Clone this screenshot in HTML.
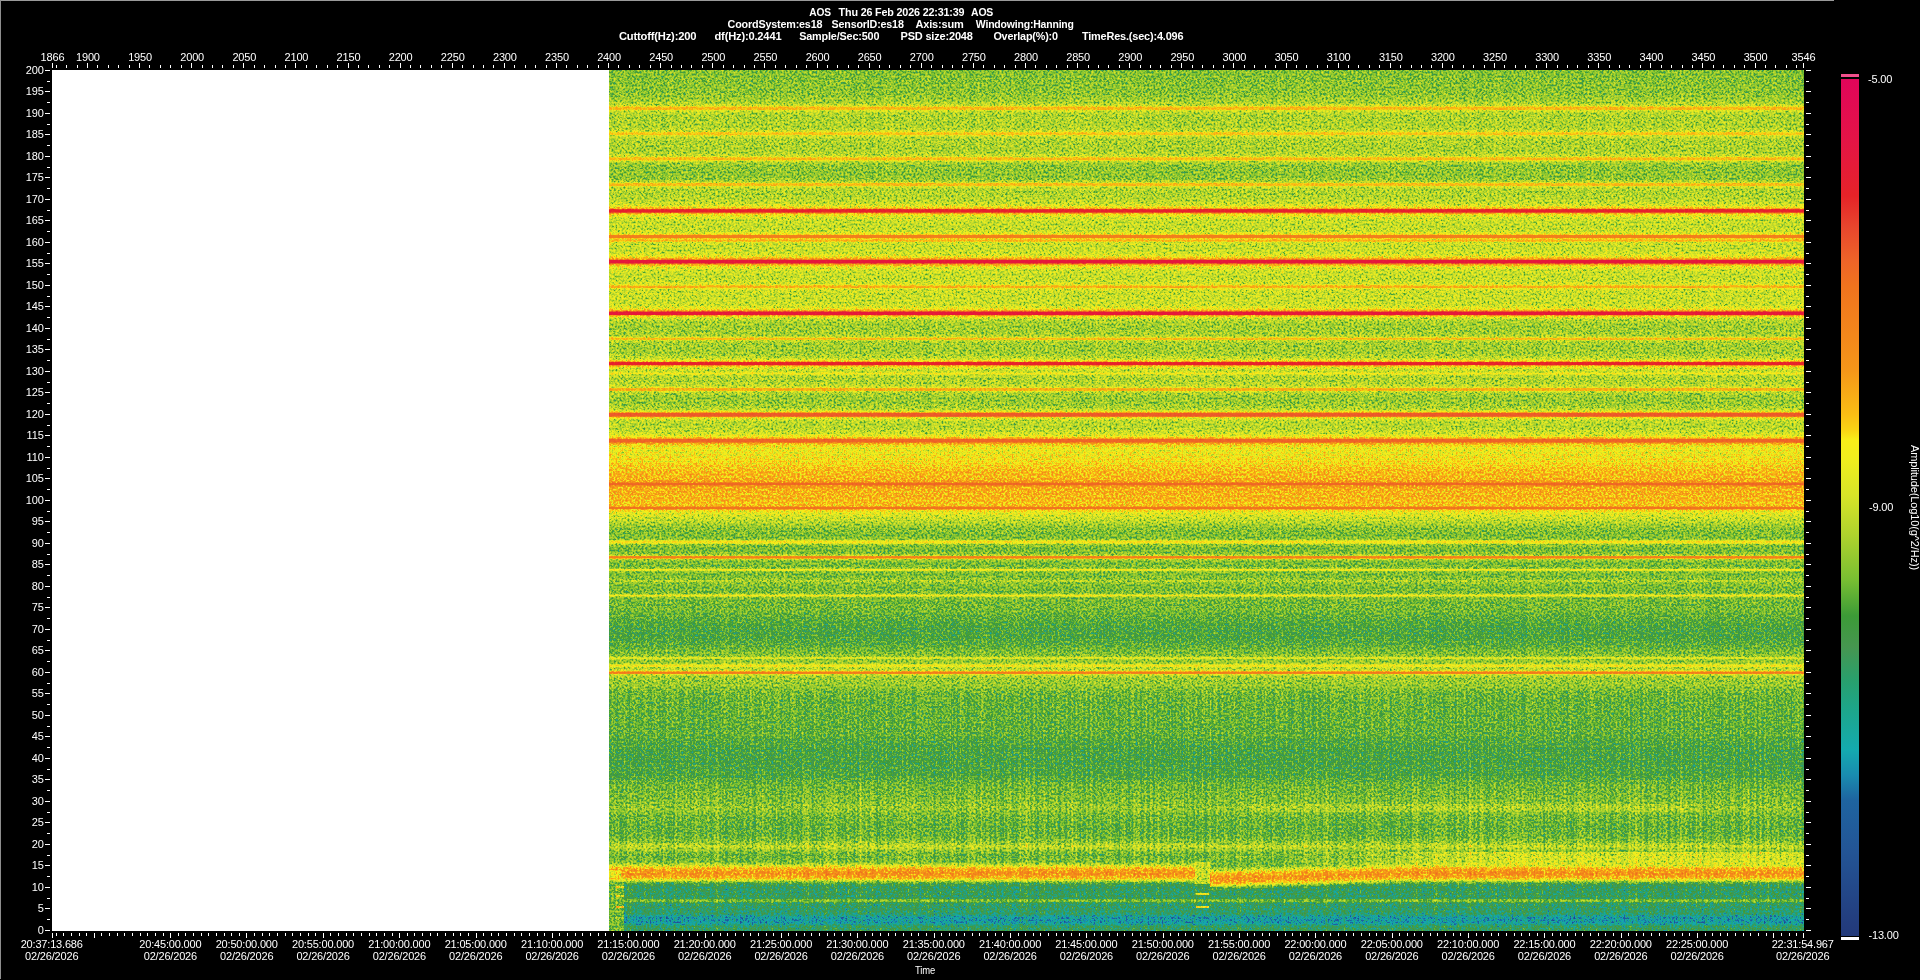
<!DOCTYPE html>
<html lang="en"><head><meta charset="utf-8"><title>AOS Spectrogram</title>
<style>html,body{margin:0;padding:0;background:#000;}body{width:1920px;height:980px;overflow:hidden;position:relative}svg{position:absolute;left:0;top:0;display:block;will-change:transform}text{font-family:"Liberation Sans",sans-serif;font-size:11px;fill:#fff;letter-spacing:-0.18px}.b{font-weight:bold}.p{white-space:pre}.m{text-anchor:middle}.e{text-anchor:end}</style></head><body>
<svg width="1920" height="980" viewBox="0 0 1920 980">
<defs>
<linearGradient id="vg" gradientUnits="userSpaceOnUse" x1="0" y1="70" x2="0" y2="931">
<stop offset="0.0000" stop-color="#6c6c6c"/>
<stop offset="0.0290" stop-color="#6f6f6f"/>
<stop offset="0.0366" stop-color="#757575"/>
<stop offset="0.0383" stop-color="#777777"/>
<stop offset="0.0401" stop-color="#7c7c7c"/>
<stop offset="0.0412" stop-color="#808080"/>
<stop offset="0.0418" stop-color="#838383"/>
<stop offset="0.0424" stop-color="#8d8d8d"/>
<stop offset="0.0430" stop-color="#989898"/>
<stop offset="0.0436" stop-color="#9d9d9d"/>
<stop offset="0.0453" stop-color="#9d9d9d"/>
<stop offset="0.0459" stop-color="#999999"/>
<stop offset="0.0470" stop-color="#848484"/>
<stop offset="0.0482" stop-color="#7f7f7f"/>
<stop offset="0.0494" stop-color="#7b7b7b"/>
<stop offset="0.0505" stop-color="#797979"/>
<stop offset="0.0534" stop-color="#777777"/>
<stop offset="0.0645" stop-color="#777777"/>
<stop offset="0.0674" stop-color="#787878"/>
<stop offset="0.0691" stop-color="#7b7b7b"/>
<stop offset="0.0703" stop-color="#7e7e7e"/>
<stop offset="0.0714" stop-color="#828282"/>
<stop offset="0.0720" stop-color="#888888"/>
<stop offset="0.0726" stop-color="#929292"/>
<stop offset="0.0732" stop-color="#999999"/>
<stop offset="0.0738" stop-color="#9a9a9a"/>
<stop offset="0.0743" stop-color="#9a9a9a"/>
<stop offset="0.0749" stop-color="#989898"/>
<stop offset="0.0755" stop-color="#909090"/>
<stop offset="0.0761" stop-color="#858585"/>
<stop offset="0.0772" stop-color="#7f7f7f"/>
<stop offset="0.0790" stop-color="#7a7a7a"/>
<stop offset="0.0813" stop-color="#787878"/>
<stop offset="0.0848" stop-color="#777777"/>
<stop offset="0.0918" stop-color="#767676"/>
<stop offset="0.0958" stop-color="#787878"/>
<stop offset="0.0981" stop-color="#7b7b7b"/>
<stop offset="0.0993" stop-color="#7e7e7e"/>
<stop offset="0.1005" stop-color="#828282"/>
<stop offset="0.1010" stop-color="#878787"/>
<stop offset="0.1016" stop-color="#939393"/>
<stop offset="0.1022" stop-color="#9b9b9b"/>
<stop offset="0.1028" stop-color="#9c9c9c"/>
<stop offset="0.1039" stop-color="#9c9c9c"/>
<stop offset="0.1045" stop-color="#989898"/>
<stop offset="0.1051" stop-color="#8d8d8d"/>
<stop offset="0.1057" stop-color="#818181"/>
<stop offset="0.1069" stop-color="#7a7a7a"/>
<stop offset="0.1080" stop-color="#757575"/>
<stop offset="0.1086" stop-color="#747474"/>
<stop offset="0.1115" stop-color="#707070"/>
<stop offset="0.1161" stop-color="#6f6f6f"/>
<stop offset="0.1225" stop-color="#6f6f6f"/>
<stop offset="0.1254" stop-color="#707070"/>
<stop offset="0.1278" stop-color="#737373"/>
<stop offset="0.1295" stop-color="#797979"/>
<stop offset="0.1307" stop-color="#808080"/>
<stop offset="0.1312" stop-color="#8f8f8f"/>
<stop offset="0.1318" stop-color="#999999"/>
<stop offset="0.1324" stop-color="#9c9c9c"/>
<stop offset="0.1336" stop-color="#9c9c9c"/>
<stop offset="0.1341" stop-color="#9a9a9a"/>
<stop offset="0.1347" stop-color="#909090"/>
<stop offset="0.1353" stop-color="#848484"/>
<stop offset="0.1365" stop-color="#7e7e7e"/>
<stop offset="0.1376" stop-color="#7b7b7b"/>
<stop offset="0.1400" stop-color="#787878"/>
<stop offset="0.1423" stop-color="#787878"/>
<stop offset="0.1469" stop-color="#787878"/>
<stop offset="0.1516" stop-color="#7b7b7b"/>
<stop offset="0.1545" stop-color="#7e7e7e"/>
<stop offset="0.1568" stop-color="#848484"/>
<stop offset="0.1580" stop-color="#898989"/>
<stop offset="0.1585" stop-color="#8c8c8c"/>
<stop offset="0.1597" stop-color="#959595"/>
<stop offset="0.1603" stop-color="#9c9c9c"/>
<stop offset="0.1609" stop-color="#a3a3a3"/>
<stop offset="0.1614" stop-color="#b5b5b5"/>
<stop offset="0.1620" stop-color="#cfcfcf"/>
<stop offset="0.1626" stop-color="#dedede"/>
<stop offset="0.1643" stop-color="#dedede"/>
<stop offset="0.1649" stop-color="#d9d9d9"/>
<stop offset="0.1655" stop-color="#c6c6c6"/>
<stop offset="0.1661" stop-color="#aaaaaa"/>
<stop offset="0.1667" stop-color="#a1a1a1"/>
<stop offset="0.1672" stop-color="#9a9a9a"/>
<stop offset="0.1678" stop-color="#949494"/>
<stop offset="0.1690" stop-color="#8c8c8c"/>
<stop offset="0.1702" stop-color="#878787"/>
<stop offset="0.1719" stop-color="#828282"/>
<stop offset="0.1754" stop-color="#7e7e7e"/>
<stop offset="0.1812" stop-color="#7d7d7d"/>
<stop offset="0.1852" stop-color="#7e7e7e"/>
<stop offset="0.1870" stop-color="#808080"/>
<stop offset="0.1882" stop-color="#838383"/>
<stop offset="0.1893" stop-color="#878787"/>
<stop offset="0.1905" stop-color="#8e8e8e"/>
<stop offset="0.1911" stop-color="#969696"/>
<stop offset="0.1916" stop-color="#a9a9a9"/>
<stop offset="0.1922" stop-color="#b7b7b7"/>
<stop offset="0.1928" stop-color="#b9b9b9"/>
<stop offset="0.1940" stop-color="#b9b9b9"/>
<stop offset="0.1945" stop-color="#b7b7b7"/>
<stop offset="0.1951" stop-color="#a9a9a9"/>
<stop offset="0.1957" stop-color="#999999"/>
<stop offset="0.1963" stop-color="#929292"/>
<stop offset="0.1969" stop-color="#959595"/>
<stop offset="0.1974" stop-color="#9c9c9c"/>
<stop offset="0.1980" stop-color="#a0a0a0"/>
<stop offset="0.1986" stop-color="#9d9d9d"/>
<stop offset="0.1992" stop-color="#949494"/>
<stop offset="0.1998" stop-color="#868686"/>
<stop offset="0.2003" stop-color="#838383"/>
<stop offset="0.2015" stop-color="#808080"/>
<stop offset="0.2033" stop-color="#7e7e7e"/>
<stop offset="0.2067" stop-color="#7e7e7e"/>
<stop offset="0.2102" stop-color="#7f7f7f"/>
<stop offset="0.2131" stop-color="#828282"/>
<stop offset="0.2149" stop-color="#858585"/>
<stop offset="0.2166" stop-color="#8d8d8d"/>
<stop offset="0.2178" stop-color="#959595"/>
<stop offset="0.2184" stop-color="#9b9b9b"/>
<stop offset="0.2189" stop-color="#a2a2a2"/>
<stop offset="0.2195" stop-color="#ababab"/>
<stop offset="0.2201" stop-color="#bababa"/>
<stop offset="0.2207" stop-color="#d5d5d5"/>
<stop offset="0.2213" stop-color="#e5e5e5"/>
<stop offset="0.2218" stop-color="#e7e7e7"/>
<stop offset="0.2236" stop-color="#e7e7e7"/>
<stop offset="0.2242" stop-color="#dddddd"/>
<stop offset="0.2253" stop-color="#afafaf"/>
<stop offset="0.2259" stop-color="#a6a6a6"/>
<stop offset="0.2265" stop-color="#9e9e9e"/>
<stop offset="0.2271" stop-color="#979797"/>
<stop offset="0.2276" stop-color="#929292"/>
<stop offset="0.2288" stop-color="#8b8b8b"/>
<stop offset="0.2300" stop-color="#868686"/>
<stop offset="0.2311" stop-color="#838383"/>
<stop offset="0.2334" stop-color="#808080"/>
<stop offset="0.2369" stop-color="#7e7e7e"/>
<stop offset="0.2433" stop-color="#7e7e7e"/>
<stop offset="0.2468" stop-color="#808080"/>
<stop offset="0.2485" stop-color="#838383"/>
<stop offset="0.2497" stop-color="#898989"/>
<stop offset="0.2509" stop-color="#9d9d9d"/>
<stop offset="0.2515" stop-color="#a1a1a1"/>
<stop offset="0.2520" stop-color="#a1a1a1"/>
<stop offset="0.2526" stop-color="#9e9e9e"/>
<stop offset="0.2532" stop-color="#959595"/>
<stop offset="0.2538" stop-color="#8a8a8a"/>
<stop offset="0.2549" stop-color="#848484"/>
<stop offset="0.2561" stop-color="#818181"/>
<stop offset="0.2578" stop-color="#7f7f7f"/>
<stop offset="0.2602" stop-color="#7e7e7e"/>
<stop offset="0.2706" stop-color="#7f7f7f"/>
<stop offset="0.2729" stop-color="#808080"/>
<stop offset="0.2747" stop-color="#838383"/>
<stop offset="0.2764" stop-color="#898989"/>
<stop offset="0.2776" stop-color="#909090"/>
<stop offset="0.2782" stop-color="#949494"/>
<stop offset="0.2787" stop-color="#9b9b9b"/>
<stop offset="0.2793" stop-color="#a2a2a2"/>
<stop offset="0.2799" stop-color="#acacac"/>
<stop offset="0.2811" stop-color="#dcdcdc"/>
<stop offset="0.2816" stop-color="#e7e7e7"/>
<stop offset="0.2834" stop-color="#e7e7e7"/>
<stop offset="0.2840" stop-color="#dfdfdf"/>
<stop offset="0.2846" stop-color="#c6c6c6"/>
<stop offset="0.2851" stop-color="#a8a8a8"/>
<stop offset="0.2857" stop-color="#9e9e9e"/>
<stop offset="0.2863" stop-color="#959595"/>
<stop offset="0.2869" stop-color="#8e8e8e"/>
<stop offset="0.2875" stop-color="#888888"/>
<stop offset="0.2880" stop-color="#838383"/>
<stop offset="0.2886" stop-color="#808080"/>
<stop offset="0.2898" stop-color="#7b7b7b"/>
<stop offset="0.2909" stop-color="#797979"/>
<stop offset="0.2933" stop-color="#757575"/>
<stop offset="0.2967" stop-color="#747474"/>
<stop offset="0.3049" stop-color="#747474"/>
<stop offset="0.3066" stop-color="#757575"/>
<stop offset="0.3084" stop-color="#777777"/>
<stop offset="0.3095" stop-color="#7b7b7b"/>
<stop offset="0.3101" stop-color="#7e7e7e"/>
<stop offset="0.3107" stop-color="#898989"/>
<stop offset="0.3113" stop-color="#969696"/>
<stop offset="0.3118" stop-color="#9d9d9d"/>
<stop offset="0.3124" stop-color="#9d9d9d"/>
<stop offset="0.3130" stop-color="#989898"/>
<stop offset="0.3142" stop-color="#7f7f7f"/>
<stop offset="0.3153" stop-color="#797979"/>
<stop offset="0.3165" stop-color="#767676"/>
<stop offset="0.3182" stop-color="#747474"/>
<stop offset="0.3200" stop-color="#747474"/>
<stop offset="0.3269" stop-color="#747474"/>
<stop offset="0.3310" stop-color="#767676"/>
<stop offset="0.3333" stop-color="#797979"/>
<stop offset="0.3345" stop-color="#7c7c7c"/>
<stop offset="0.3357" stop-color="#828282"/>
<stop offset="0.3368" stop-color="#8b8b8b"/>
<stop offset="0.3374" stop-color="#909090"/>
<stop offset="0.3380" stop-color="#989898"/>
<stop offset="0.3386" stop-color="#a1a1a1"/>
<stop offset="0.3391" stop-color="#bdbdbd"/>
<stop offset="0.3397" stop-color="#d6d6d6"/>
<stop offset="0.3403" stop-color="#dfdfdf"/>
<stop offset="0.3415" stop-color="#dfdfdf"/>
<stop offset="0.3420" stop-color="#dcdcdc"/>
<stop offset="0.3426" stop-color="#c9c9c9"/>
<stop offset="0.3432" stop-color="#acacac"/>
<stop offset="0.3438" stop-color="#9e9e9e"/>
<stop offset="0.3444" stop-color="#969696"/>
<stop offset="0.3449" stop-color="#909090"/>
<stop offset="0.3455" stop-color="#8b8b8b"/>
<stop offset="0.3467" stop-color="#848484"/>
<stop offset="0.3479" stop-color="#808080"/>
<stop offset="0.3496" stop-color="#7d7d7d"/>
<stop offset="0.3508" stop-color="#7e7e7e"/>
<stop offset="0.3513" stop-color="#848484"/>
<stop offset="0.3519" stop-color="#8d8d8d"/>
<stop offset="0.3525" stop-color="#919191"/>
<stop offset="0.3531" stop-color="#8c8c8c"/>
<stop offset="0.3537" stop-color="#848484"/>
<stop offset="0.3542" stop-color="#7d7d7d"/>
<stop offset="0.3554" stop-color="#7a7a7a"/>
<stop offset="0.3577" stop-color="#787878"/>
<stop offset="0.3612" stop-color="#787878"/>
<stop offset="0.3641" stop-color="#797979"/>
<stop offset="0.3659" stop-color="#7b7b7b"/>
<stop offset="0.3676" stop-color="#7f7f7f"/>
<stop offset="0.3688" stop-color="#868686"/>
<stop offset="0.3693" stop-color="#929292"/>
<stop offset="0.3699" stop-color="#9e9e9e"/>
<stop offset="0.3705" stop-color="#a2a2a2"/>
<stop offset="0.3717" stop-color="#a2a2a2"/>
<stop offset="0.3722" stop-color="#9d9d9d"/>
<stop offset="0.3728" stop-color="#909090"/>
<stop offset="0.3734" stop-color="#828282"/>
<stop offset="0.3740" stop-color="#7e7e7e"/>
<stop offset="0.3751" stop-color="#787878"/>
<stop offset="0.3763" stop-color="#757575"/>
<stop offset="0.3798" stop-color="#727272"/>
<stop offset="0.3856" stop-color="#727272"/>
<stop offset="0.3897" stop-color="#747474"/>
<stop offset="0.3926" stop-color="#777777"/>
<stop offset="0.3943" stop-color="#7c7c7c"/>
<stop offset="0.3955" stop-color="#828282"/>
<stop offset="0.3961" stop-color="#868686"/>
<stop offset="0.3972" stop-color="#909090"/>
<stop offset="0.3978" stop-color="#a1a1a1"/>
<stop offset="0.3984" stop-color="#bababa"/>
<stop offset="0.3990" stop-color="#cccccc"/>
<stop offset="0.4013" stop-color="#cccccc"/>
<stop offset="0.4019" stop-color="#c9c9c9"/>
<stop offset="0.4024" stop-color="#b6b6b6"/>
<stop offset="0.4030" stop-color="#9c9c9c"/>
<stop offset="0.4036" stop-color="#919191"/>
<stop offset="0.4042" stop-color="#8c8c8c"/>
<stop offset="0.4053" stop-color="#848484"/>
<stop offset="0.4065" stop-color="#7f7f7f"/>
<stop offset="0.4082" stop-color="#7b7b7b"/>
<stop offset="0.4106" stop-color="#797979"/>
<stop offset="0.4146" stop-color="#7a7a7a"/>
<stop offset="0.4193" stop-color="#7d7d7d"/>
<stop offset="0.4222" stop-color="#818181"/>
<stop offset="0.4233" stop-color="#848484"/>
<stop offset="0.4245" stop-color="#888888"/>
<stop offset="0.4257" stop-color="#8e8e8e"/>
<stop offset="0.4262" stop-color="#929292"/>
<stop offset="0.4274" stop-color="#9e9e9e"/>
<stop offset="0.4280" stop-color="#a5a5a5"/>
<stop offset="0.4286" stop-color="#b7b7b7"/>
<stop offset="0.4292" stop-color="#c5c5c5"/>
<stop offset="0.4297" stop-color="#c9c9c9"/>
<stop offset="0.4315" stop-color="#c9c9c9"/>
<stop offset="0.4321" stop-color="#c4c4c4"/>
<stop offset="0.4332" stop-color="#a8a8a8"/>
<stop offset="0.4338" stop-color="#a1a1a1"/>
<stop offset="0.4350" stop-color="#989898"/>
<stop offset="0.4361" stop-color="#939393"/>
<stop offset="0.4373" stop-color="#8f8f8f"/>
<stop offset="0.4384" stop-color="#8d8d8d"/>
<stop offset="0.4402" stop-color="#8c8c8c"/>
<stop offset="0.4443" stop-color="#8c8c8c"/>
<stop offset="0.4530" stop-color="#919191"/>
<stop offset="0.4669" stop-color="#9d9d9d"/>
<stop offset="0.4733" stop-color="#9e9e9e"/>
<stop offset="0.4762" stop-color="#a1a1a1"/>
<stop offset="0.4774" stop-color="#a4a4a4"/>
<stop offset="0.4785" stop-color="#a9a9a9"/>
<stop offset="0.4791" stop-color="#b0b0b0"/>
<stop offset="0.4797" stop-color="#bdbdbd"/>
<stop offset="0.4803" stop-color="#c6c6c6"/>
<stop offset="0.4808" stop-color="#c6c6c6"/>
<stop offset="0.4814" stop-color="#c6c6c6"/>
<stop offset="0.4820" stop-color="#bebebe"/>
<stop offset="0.4826" stop-color="#b1b1b1"/>
<stop offset="0.4832" stop-color="#aaaaaa"/>
<stop offset="0.4843" stop-color="#a5a5a5"/>
<stop offset="0.4855" stop-color="#a2a2a2"/>
<stop offset="0.4884" stop-color="#a0a0a0"/>
<stop offset="0.4994" stop-color="#9e9e9e"/>
<stop offset="0.5029" stop-color="#9b9b9b"/>
<stop offset="0.5046" stop-color="#9b9b9b"/>
<stop offset="0.5058" stop-color="#9d9d9d"/>
<stop offset="0.5064" stop-color="#a0a0a0"/>
<stop offset="0.5070" stop-color="#a5a5a5"/>
<stop offset="0.5075" stop-color="#b4b4b4"/>
<stop offset="0.5081" stop-color="#bfbfbf"/>
<stop offset="0.5087" stop-color="#c0c0c0"/>
<stop offset="0.5093" stop-color="#bfbfbf"/>
<stop offset="0.5099" stop-color="#b2b2b2"/>
<stop offset="0.5105" stop-color="#a0a0a0"/>
<stop offset="0.5110" stop-color="#979797"/>
<stop offset="0.5116" stop-color="#939393"/>
<stop offset="0.5128" stop-color="#8e8e8e"/>
<stop offset="0.5139" stop-color="#8a8a8a"/>
<stop offset="0.5157" stop-color="#878787"/>
<stop offset="0.5319" stop-color="#6f6f6f"/>
<stop offset="0.5407" stop-color="#6a6a6a"/>
<stop offset="0.5436" stop-color="#6d6d6d"/>
<stop offset="0.5453" stop-color="#727272"/>
<stop offset="0.5459" stop-color="#757575"/>
<stop offset="0.5465" stop-color="#848484"/>
<stop offset="0.5470" stop-color="#8f8f8f"/>
<stop offset="0.5476" stop-color="#929292"/>
<stop offset="0.5488" stop-color="#929292"/>
<stop offset="0.5494" stop-color="#8f8f8f"/>
<stop offset="0.5499" stop-color="#848484"/>
<stop offset="0.5505" stop-color="#757575"/>
<stop offset="0.5511" stop-color="#727272"/>
<stop offset="0.5523" stop-color="#6e6e6e"/>
<stop offset="0.5534" stop-color="#6c6c6c"/>
<stop offset="0.5557" stop-color="#6a6a6a"/>
<stop offset="0.5581" stop-color="#6a6a6a"/>
<stop offset="0.5598" stop-color="#6b6b6b"/>
<stop offset="0.5616" stop-color="#6f6f6f"/>
<stop offset="0.5627" stop-color="#747474"/>
<stop offset="0.5633" stop-color="#787878"/>
<stop offset="0.5639" stop-color="#7e7e7e"/>
<stop offset="0.5645" stop-color="#939393"/>
<stop offset="0.5650" stop-color="#ababab"/>
<stop offset="0.5656" stop-color="#b7b7b7"/>
<stop offset="0.5662" stop-color="#b7b7b7"/>
<stop offset="0.5668" stop-color="#afafaf"/>
<stop offset="0.5674" stop-color="#999999"/>
<stop offset="0.5679" stop-color="#808080"/>
<stop offset="0.5685" stop-color="#797979"/>
<stop offset="0.5691" stop-color="#747474"/>
<stop offset="0.5697" stop-color="#717171"/>
<stop offset="0.5708" stop-color="#6d6d6d"/>
<stop offset="0.5720" stop-color="#6b6b6b"/>
<stop offset="0.5738" stop-color="#6a6a6a"/>
<stop offset="0.5761" stop-color="#6b6b6b"/>
<stop offset="0.5772" stop-color="#6c6c6c"/>
<stop offset="0.5784" stop-color="#6f6f6f"/>
<stop offset="0.5790" stop-color="#767676"/>
<stop offset="0.5796" stop-color="#848484"/>
<stop offset="0.5801" stop-color="#8d8d8d"/>
<stop offset="0.5807" stop-color="#8e8e8e"/>
<stop offset="0.5813" stop-color="#868686"/>
<stop offset="0.5819" stop-color="#797979"/>
<stop offset="0.5825" stop-color="#707070"/>
<stop offset="0.5830" stop-color="#6e6e6e"/>
<stop offset="0.5842" stop-color="#6b6b6b"/>
<stop offset="0.5859" stop-color="#6a6a6a"/>
<stop offset="0.5877" stop-color="#6b6b6b"/>
<stop offset="0.5906" stop-color="#6e6e6e"/>
<stop offset="0.5918" stop-color="#707070"/>
<stop offset="0.5923" stop-color="#737373"/>
<stop offset="0.5929" stop-color="#787878"/>
<stop offset="0.5935" stop-color="#7b7b7b"/>
<stop offset="0.5941" stop-color="#787878"/>
<stop offset="0.5947" stop-color="#737373"/>
<stop offset="0.5952" stop-color="#707070"/>
<stop offset="0.5970" stop-color="#6d6d6d"/>
<stop offset="0.6010" stop-color="#6a6a6a"/>
<stop offset="0.6063" stop-color="#6a6a6a"/>
<stop offset="0.6074" stop-color="#6c6c6c"/>
<stop offset="0.6080" stop-color="#6e6e6e"/>
<stop offset="0.6086" stop-color="#717171"/>
<stop offset="0.6098" stop-color="#8a8a8a"/>
<stop offset="0.6103" stop-color="#8e8e8e"/>
<stop offset="0.6109" stop-color="#8a8a8a"/>
<stop offset="0.6121" stop-color="#717171"/>
<stop offset="0.6127" stop-color="#6e6e6e"/>
<stop offset="0.6132" stop-color="#6c6c6c"/>
<stop offset="0.6144" stop-color="#6a6a6a"/>
<stop offset="0.6173" stop-color="#696969"/>
<stop offset="0.6272" stop-color="#696969"/>
<stop offset="0.6388" stop-color="#626262"/>
<stop offset="0.6527" stop-color="#5d5d5d"/>
<stop offset="0.6678" stop-color="#626262"/>
<stop offset="0.6760" stop-color="#6b6b6b"/>
<stop offset="0.6794" stop-color="#6d6d6d"/>
<stop offset="0.6806" stop-color="#707070"/>
<stop offset="0.6812" stop-color="#727272"/>
<stop offset="0.6818" stop-color="#7a7a7a"/>
<stop offset="0.6823" stop-color="#848484"/>
<stop offset="0.6829" stop-color="#888888"/>
<stop offset="0.6835" stop-color="#848484"/>
<stop offset="0.6841" stop-color="#7b7b7b"/>
<stop offset="0.6847" stop-color="#747474"/>
<stop offset="0.6858" stop-color="#717171"/>
<stop offset="0.6876" stop-color="#717171"/>
<stop offset="0.6887" stop-color="#747474"/>
<stop offset="0.6899" stop-color="#797979"/>
<stop offset="0.6905" stop-color="#848484"/>
<stop offset="0.6911" stop-color="#8e8e8e"/>
<stop offset="0.6916" stop-color="#919191"/>
<stop offset="0.6922" stop-color="#919191"/>
<stop offset="0.6928" stop-color="#8d8d8d"/>
<stop offset="0.6934" stop-color="#848484"/>
<stop offset="0.6940" stop-color="#7c7c7c"/>
<stop offset="0.6945" stop-color="#7a7a7a"/>
<stop offset="0.6957" stop-color="#7a7a7a"/>
<stop offset="0.6963" stop-color="#7c7c7c"/>
<stop offset="0.6969" stop-color="#7e7e7e"/>
<stop offset="0.6974" stop-color="#828282"/>
<stop offset="0.6980" stop-color="#898989"/>
<stop offset="0.6986" stop-color="#9d9d9d"/>
<stop offset="0.6992" stop-color="#b3b3b3"/>
<stop offset="0.6998" stop-color="#bcbcbc"/>
<stop offset="0.7003" stop-color="#bcbcbc"/>
<stop offset="0.7009" stop-color="#afafaf"/>
<stop offset="0.7015" stop-color="#979797"/>
<stop offset="0.7021" stop-color="#868686"/>
<stop offset="0.7027" stop-color="#808080"/>
<stop offset="0.7033" stop-color="#7c7c7c"/>
<stop offset="0.7038" stop-color="#797979"/>
<stop offset="0.7050" stop-color="#767676"/>
<stop offset="0.7062" stop-color="#747474"/>
<stop offset="0.7091" stop-color="#727272"/>
<stop offset="0.7154" stop-color="#717171"/>
<stop offset="0.7236" stop-color="#676767"/>
<stop offset="0.7317" stop-color="#656565"/>
<stop offset="0.7724" stop-color="#636363"/>
<stop offset="0.7840" stop-color="#5d5d5d"/>
<stop offset="0.8014" stop-color="#5b5b5b"/>
<stop offset="0.8188" stop-color="#5d5d5d"/>
<stop offset="0.8304" stop-color="#666666"/>
<stop offset="0.8479" stop-color="#6a6a6a"/>
<stop offset="0.8571" stop-color="#707070"/>
<stop offset="0.8664" stop-color="#686868"/>
<stop offset="0.8769" stop-color="#646464"/>
<stop offset="0.8897" stop-color="#656565"/>
<stop offset="0.8966" stop-color="#6e6e6e"/>
<stop offset="0.9019" stop-color="#7c7c7c"/>
<stop offset="0.9071" stop-color="#6e6e6e"/>
<stop offset="0.9117" stop-color="#666666"/>
<stop offset="0.9199" stop-color="#696969"/>
<stop offset="0.9239" stop-color="#828282"/>
<stop offset="0.9274" stop-color="#9e9e9e"/>
<stop offset="0.9332" stop-color="#adadad"/>
<stop offset="0.9384" stop-color="#9e9e9e"/>
<stop offset="0.9413" stop-color="#828282"/>
<stop offset="0.9443" stop-color="#5e5e5e"/>
<stop offset="0.9477" stop-color="#515151"/>
<stop offset="0.9623" stop-color="#505050"/>
<stop offset="0.9634" stop-color="#656565"/>
<stop offset="0.9640" stop-color="#6b6b6b"/>
<stop offset="0.9657" stop-color="#6a6a6a"/>
<stop offset="0.9663" stop-color="#626262"/>
<stop offset="0.9675" stop-color="#4f4f4f"/>
<stop offset="0.9803" stop-color="#4c4c4c"/>
<stop offset="0.9837" stop-color="#383838"/>
<stop offset="0.9907" stop-color="#363636"/>
<stop offset="0.9942" stop-color="#4e4e4e"/>
<stop offset="1.0000" stop-color="#515151"/>
</linearGradient>
<linearGradient id="cb" gradientUnits="userSpaceOnUse" x1="0" y1="79" x2="0" y2="936">
<stop offset="0.0000" stop-color="#e1055a"/>
<stop offset="0.0712" stop-color="#e41446"/>
<stop offset="0.1365" stop-color="#e62328"/>
<stop offset="0.1727" stop-color="#e8462d"/>
<stop offset="0.2124" stop-color="#ee6428"/>
<stop offset="0.2415" stop-color="#f0731e"/>
<stop offset="0.3396" stop-color="#f59619"/>
<stop offset="0.3921" stop-color="#fabe14"/>
<stop offset="0.4096" stop-color="#fad414"/>
<stop offset="0.4212" stop-color="#f8ee19"/>
<stop offset="0.4446" stop-color="#f0ee1e"/>
<stop offset="0.4866" stop-color="#d7e428"/>
<stop offset="0.5321" stop-color="#afd22d"/>
<stop offset="0.5846" stop-color="#78be32"/>
<stop offset="0.6266" stop-color="#3c9b37"/>
<stop offset="0.6628" stop-color="#469650"/>
<stop offset="0.7025" stop-color="#28a06e"/>
<stop offset="0.7316" stop-color="#1ea587"/>
<stop offset="0.7830" stop-color="#14aaaf"/>
<stop offset="0.8121" stop-color="#198caf"/>
<stop offset="0.8413" stop-color="#1e64a0"/>
<stop offset="0.8996" stop-color="#235596"/>
<stop offset="0.9872" stop-color="#233c7d"/>
<stop offset="1.0000" stop-color="#233a7a"/>
</linearGradient>
<filter id="sp" filterUnits="userSpaceOnUse" x="609" y="70" width="1195" height="620" color-interpolation-filters="sRGB">
<feTurbulence type="fractalNoise" baseFrequency="0.5 0.46" numOctaves="2" seed="7" result="t"/>
<feComponentTransfer in="t" result="t2"><feFuncR type="table" tableValues=".367 .367 .367 .367 .367 .367 .367 .367 .367 .367 .367 .367 .367 .367 .367 .367 .367 .367 .367 .367 .367 .367 .367 .367 .367 .367 .367 .367 .367 .367 .367 .367 .367 .367 .367 .367 .367 .367 .367 .367 .367 .367 .367 .367 .367 .367 .367 .367 .367 .367 .367 .367 .367 .367 .367 .367 .367 .367 .367 .367 .367 .370 .373 .377 .380 .384 .387 .391 .394 .397 .400 .403 .406 .409 .412 .414 .417 .420 .422 .425 .427 .429 .431 .433 .435 .437 .439 .441 .443 .444 .446 .448 .449 .451 .452 .454 .456 .457 .458 .460 .461 .463 .464 .466 .467 .468 .470 .471 .472 .474 .475 .477 .478 .479 .481 .482 .484 .485 .487 .489 .490 .492 .493 .495 .497 .499 .501 .502 .505 .508 .510 .511 .513 .514 .516 .517 .519 .520 .522 .523 .524 .525 .527 .528 .529 .530 .531 .532 .533 .534 .535 .536 .537 .538 .539 .540 .541 .542 .543 .544 .545 .546 .547 .548 .549 .550 .551 .552 .553 .554 .555 .556 .557 .558 .559 .560 .561 .563 .564 .565 .566 .567 .568 .570 .571 .572 .573 .574 .576 .577 .578 .579 .580 .581 .582 .583 .585 .586 .586 .587 .588 .589 .590 .591 .592 .593 .594 .595 .596 .597 .598 .599 .600 .601 .602 .603 .604 .605 .606 .608 .609 .610 .611 .611 .611 .611 .611 .611 .611 .611 .611 .611 .611 .611 .611 .611 .611 .611 .611 .611 .611 .611 .611 .611 .611 .611 .611 .611 .611 .611 .611 .611 .611 .611 .611 .611"/></feComponentTransfer>
<feColorMatrix in="t2" type="matrix" values="1 0 0 0 0 1 0 0 0 0 1 0 0 0 0 0 0 0 0 1" result="n1"/>
<feTurbulence type="fractalNoise" baseFrequency="0.42 0.004" numOctaves="2" seed="11" result="c"/>
<feColorMatrix in="c" type="matrix" values="1 0 0 0 0 1 0 0 0 0 1 0 0 0 0 0 0 0 0 1" result="n2"/>
<feComposite in="n1" in2="n2" operator="arithmetic" k1="0" k2="1" k3="0.06" k4="-0.03" result="n"/>
<feComposite in="SourceGraphic" in2="n" operator="arithmetic" k1="0" k2="1" k3="1" k4="-0.5" result="v"/>
<feComponentTransfer in="v"><feFuncR type="table" tableValues="0.137 0.137 0.137 0.137 0.137 0.137 0.137 0.137 0.137 0.137 0.137 0.137 0.137 0.137 0.134 0.132 0.129 0.126 0.124 0.121 0.118 0.114 0.109 0.104 0.098 0.093 0.088 0.083 0.080 0.086 0.092 0.098 0.104 0.110 0.116 0.124 0.135 0.145 0.156 0.178 0.201 0.224 0.248 0.271 0.267 0.259 0.250 0.242 0.244 0.288 0.332 0.376 0.419 0.463 0.497 0.529 0.561 0.593 0.626 0.658 0.689 0.716 0.743 0.770 0.797 0.824 0.848 0.867 0.885 0.903 0.921 0.939 0.951 0.961 0.972 0.977 0.980 0.980 0.980 0.977 0.974 0.971 0.968 0.965 0.962 0.960 0.958 0.957 0.955 0.954 0.952 0.951 0.949 0.948 0.946 0.944 0.943 0.941 0.939 0.937 0.935 0.932 0.928 0.923 0.919 0.914 0.910 0.908 0.906 0.905 0.903 0.902 0.901 0.900 0.899 0.898 0.897 0.896 0.895 0.894 0.893 0.891 0.890 0.889 0.888 0.886 0.885 0.884 0.882"/><feFuncG type="table" tableValues="0.227 0.232 0.238 0.247 0.256 0.265 0.273 0.282 0.291 0.300 0.308 0.317 0.326 0.335 0.342 0.350 0.358 0.366 0.374 0.382 0.390 0.421 0.463 0.505 0.547 0.579 0.611 0.642 0.666 0.663 0.660 0.657 0.654 0.651 0.648 0.644 0.638 0.633 0.628 0.620 0.613 0.605 0.597 0.590 0.592 0.596 0.600 0.604 0.613 0.639 0.664 0.690 0.715 0.741 0.755 0.766 0.778 0.790 0.801 0.813 0.825 0.837 0.849 0.861 0.873 0.885 0.896 0.903 0.911 0.918 0.925 0.933 0.933 0.933 0.933 0.871 0.815 0.777 0.741 0.717 0.694 0.671 0.647 0.624 0.601 0.583 0.572 0.561 0.550 0.539 0.528 0.518 0.507 0.496 0.485 0.474 0.463 0.452 0.437 0.421 0.405 0.388 0.365 0.342 0.318 0.295 0.271 0.242 0.212 0.182 0.153 0.134 0.127 0.120 0.113 0.106 0.099 0.092 0.085 0.078 0.071 0.065 0.058 0.052 0.045 0.039 0.033 0.026 0.020"/><feFuncB type="table" tableValues="0.478 0.486 0.493 0.502 0.511 0.520 0.528 0.537 0.546 0.555 0.563 0.572 0.581 0.589 0.594 0.600 0.605 0.610 0.615 0.621 0.626 0.638 0.654 0.670 0.686 0.686 0.686 0.686 0.681 0.657 0.633 0.609 0.586 0.562 0.538 0.512 0.486 0.460 0.434 0.410 0.387 0.364 0.341 0.318 0.296 0.275 0.254 0.233 0.215 0.211 0.208 0.204 0.200 0.197 0.194 0.191 0.188 0.185 0.182 0.179 0.176 0.173 0.169 0.166 0.163 0.159 0.155 0.148 0.140 0.133 0.126 0.118 0.112 0.105 0.099 0.086 0.078 0.078 0.079 0.082 0.085 0.088 0.091 0.094 0.096 0.099 0.100 0.102 0.103 0.105 0.107 0.108 0.110 0.111 0.113 0.114 0.116 0.118 0.127 0.138 0.148 0.158 0.161 0.165 0.169 0.173 0.176 0.172 0.168 0.163 0.159 0.164 0.178 0.192 0.206 0.220 0.234 0.248 0.262 0.275 0.284 0.293 0.301 0.310 0.319 0.327 0.336 0.344 0.353"/></feComponentTransfer>
</filter>
<filter id="sp2" filterUnits="userSpaceOnUse" x="609" y="690" width="1195" height="241" color-interpolation-filters="sRGB">
<feTurbulence type="fractalNoise" baseFrequency="0.5 0.46" numOctaves="2" seed="7" result="t"/>
<feComponentTransfer in="t" result="t2"><feFuncR type="table" tableValues=".367 .367 .367 .367 .367 .367 .367 .367 .367 .367 .367 .367 .367 .367 .367 .367 .367 .367 .367 .367 .367 .367 .367 .367 .367 .367 .367 .367 .367 .367 .367 .367 .367 .367 .367 .367 .367 .367 .367 .367 .367 .367 .367 .367 .367 .367 .367 .367 .367 .367 .367 .367 .367 .367 .367 .367 .367 .367 .367 .367 .367 .370 .373 .377 .380 .384 .387 .391 .394 .397 .400 .403 .406 .409 .412 .414 .417 .420 .422 .425 .427 .429 .431 .433 .435 .437 .439 .441 .443 .444 .446 .448 .449 .451 .452 .454 .456 .457 .458 .460 .461 .463 .464 .466 .467 .468 .470 .471 .472 .474 .475 .477 .478 .479 .481 .482 .484 .485 .487 .489 .490 .492 .493 .495 .497 .499 .501 .502 .505 .508 .510 .511 .513 .514 .516 .517 .519 .520 .522 .523 .524 .525 .527 .528 .529 .530 .531 .532 .533 .534 .535 .536 .537 .538 .539 .540 .541 .542 .543 .544 .545 .546 .547 .548 .549 .550 .551 .552 .553 .554 .555 .556 .557 .558 .559 .560 .561 .563 .564 .565 .566 .567 .568 .570 .571 .572 .573 .574 .576 .577 .578 .579 .580 .581 .582 .583 .585 .586 .586 .587 .588 .589 .590 .591 .592 .593 .594 .595 .596 .597 .598 .599 .600 .601 .602 .603 .604 .605 .606 .608 .609 .610 .611 .611 .611 .611 .611 .611 .611 .611 .611 .611 .611 .611 .611 .611 .611 .611 .611 .611 .611 .611 .611 .611 .611 .611 .611 .611 .611 .611 .611 .611 .611 .611 .611 .611"/></feComponentTransfer>
<feColorMatrix in="t2" type="matrix" values="1 0 0 0 0 1 0 0 0 0 1 0 0 0 0 0 0 0 0 1" result="n1"/>
<feTurbulence type="fractalNoise" baseFrequency="0.42 0.004" numOctaves="2" seed="11" result="c"/>
<feColorMatrix in="c" type="matrix" values="1 0 0 0 0 1 0 0 0 0 1 0 0 0 0 0 0 0 0 1" result="n2"/>
<feComposite in="n1" in2="n2" operator="arithmetic" k1="0" k2="1" k3="0.15" k4="-0.07" result="n"/>
<feComposite in="SourceGraphic" in2="n" operator="arithmetic" k1="0" k2="1" k3="1" k4="-0.5" result="v"/>
<feComponentTransfer in="v"><feFuncR type="table" tableValues="0.137 0.137 0.137 0.137 0.137 0.137 0.137 0.137 0.137 0.137 0.137 0.137 0.137 0.137 0.134 0.132 0.129 0.126 0.124 0.121 0.118 0.114 0.109 0.104 0.098 0.093 0.088 0.083 0.080 0.086 0.092 0.098 0.104 0.110 0.116 0.124 0.135 0.145 0.156 0.178 0.201 0.224 0.248 0.271 0.267 0.259 0.250 0.242 0.244 0.288 0.332 0.376 0.419 0.463 0.497 0.529 0.561 0.593 0.626 0.658 0.689 0.716 0.743 0.770 0.797 0.824 0.848 0.867 0.885 0.903 0.921 0.939 0.951 0.961 0.972 0.977 0.980 0.980 0.980 0.977 0.974 0.971 0.968 0.965 0.962 0.960 0.958 0.957 0.955 0.954 0.952 0.951 0.949 0.948 0.946 0.944 0.943 0.941 0.939 0.937 0.935 0.932 0.928 0.923 0.919 0.914 0.910 0.908 0.906 0.905 0.903 0.902 0.901 0.900 0.899 0.898 0.897 0.896 0.895 0.894 0.893 0.891 0.890 0.889 0.888 0.886 0.885 0.884 0.882"/><feFuncG type="table" tableValues="0.227 0.232 0.238 0.247 0.256 0.265 0.273 0.282 0.291 0.300 0.308 0.317 0.326 0.335 0.342 0.350 0.358 0.366 0.374 0.382 0.390 0.421 0.463 0.505 0.547 0.579 0.611 0.642 0.666 0.663 0.660 0.657 0.654 0.651 0.648 0.644 0.638 0.633 0.628 0.620 0.613 0.605 0.597 0.590 0.592 0.596 0.600 0.604 0.613 0.639 0.664 0.690 0.715 0.741 0.755 0.766 0.778 0.790 0.801 0.813 0.825 0.837 0.849 0.861 0.873 0.885 0.896 0.903 0.911 0.918 0.925 0.933 0.933 0.933 0.933 0.871 0.815 0.777 0.741 0.717 0.694 0.671 0.647 0.624 0.601 0.583 0.572 0.561 0.550 0.539 0.528 0.518 0.507 0.496 0.485 0.474 0.463 0.452 0.437 0.421 0.405 0.388 0.365 0.342 0.318 0.295 0.271 0.242 0.212 0.182 0.153 0.134 0.127 0.120 0.113 0.106 0.099 0.092 0.085 0.078 0.071 0.065 0.058 0.052 0.045 0.039 0.033 0.026 0.020"/><feFuncB type="table" tableValues="0.478 0.486 0.493 0.502 0.511 0.520 0.528 0.537 0.546 0.555 0.563 0.572 0.581 0.589 0.594 0.600 0.605 0.610 0.615 0.621 0.626 0.638 0.654 0.670 0.686 0.686 0.686 0.686 0.681 0.657 0.633 0.609 0.586 0.562 0.538 0.512 0.486 0.460 0.434 0.410 0.387 0.364 0.341 0.318 0.296 0.275 0.254 0.233 0.215 0.211 0.208 0.204 0.200 0.197 0.194 0.191 0.188 0.185 0.182 0.179 0.176 0.173 0.169 0.166 0.163 0.159 0.155 0.148 0.140 0.133 0.126 0.118 0.112 0.105 0.099 0.086 0.078 0.078 0.079 0.082 0.085 0.088 0.091 0.094 0.096 0.099 0.100 0.102 0.103 0.105 0.107 0.108 0.110 0.111 0.113 0.114 0.116 0.118 0.127 0.138 0.148 0.158 0.161 0.165 0.169 0.173 0.176 0.172 0.168 0.163 0.159 0.164 0.178 0.192 0.206 0.220 0.234 0.248 0.262 0.275 0.284 0.293 0.301 0.310 0.319 0.327 0.336 0.344 0.353"/></feComponentTransfer>
</filter>
</defs>
<rect x="0" y="0" width="1834" height="1" fill="#9a9a9a"/>
<rect x="0" y="0" width="1" height="979" fill="#8e8e8e"/>
<rect x="52" y="70" width="1752" height="861" fill="#fff"/>
<defs><g id="val">
<rect id="base" x="609" y="70" width="1195" height="861" fill="url(#vg)"/>
<svg x="1210" y="856" width="10" height="41" viewBox="1210 856 10 41" overflow="hidden"><use href="#base" y="5.5"/></svg>
<svg x="1220" y="856" width="10" height="41" viewBox="1220 856 10 41" overflow="hidden"><use href="#base" y="5.21"/></svg>
<svg x="1230" y="856" width="10" height="41" viewBox="1230 856 10 41" overflow="hidden"><use href="#base" y="4.92"/></svg>
<svg x="1240" y="856" width="10" height="41" viewBox="1240 856 10 41" overflow="hidden"><use href="#base" y="4.63"/></svg>
<svg x="1250" y="856" width="10" height="41" viewBox="1250 856 10 41" overflow="hidden"><use href="#base" y="4.34"/></svg>
<svg x="1260" y="856" width="10" height="41" viewBox="1260 856 10 41" overflow="hidden"><use href="#base" y="4.05"/></svg>
<svg x="1270" y="856" width="10" height="41" viewBox="1270 856 10 41" overflow="hidden"><use href="#base" y="3.76"/></svg>
<svg x="1280" y="856" width="10" height="41" viewBox="1280 856 10 41" overflow="hidden"><use href="#base" y="3.47"/></svg>
<svg x="1290" y="856" width="10" height="41" viewBox="1290 856 10 41" overflow="hidden"><use href="#base" y="3.18"/></svg>
<svg x="1300" y="856" width="10" height="41" viewBox="1300 856 10 41" overflow="hidden"><use href="#base" y="2.89"/></svg>
<svg x="1310" y="856" width="10" height="41" viewBox="1310 856 10 41" overflow="hidden"><use href="#base" y="2.61"/></svg>
<svg x="1320" y="856" width="10" height="41" viewBox="1320 856 10 41" overflow="hidden"><use href="#base" y="2.32"/></svg>
<svg x="1330" y="856" width="10" height="41" viewBox="1330 856 10 41" overflow="hidden"><use href="#base" y="2.03"/></svg>
<svg x="1340" y="856" width="10" height="41" viewBox="1340 856 10 41" overflow="hidden"><use href="#base" y="1.74"/></svg>
<svg x="1350" y="856" width="10" height="41" viewBox="1350 856 10 41" overflow="hidden"><use href="#base" y="1.45"/></svg>
<svg x="1360" y="856" width="10" height="41" viewBox="1360 856 10 41" overflow="hidden"><use href="#base" y="1.16"/></svg>
<svg x="1370" y="856" width="10" height="41" viewBox="1370 856 10 41" overflow="hidden"><use href="#base" y="0.87"/></svg>
<svg x="1380" y="856" width="10" height="41" viewBox="1380 856 10 41" overflow="hidden"><use href="#base" y="0.58"/></svg>
<svg x="1390" y="856" width="10" height="41" viewBox="1390 856 10 41" overflow="hidden"><use href="#base" y="0.29"/></svg>
<linearGradient id="xr" gradientUnits="userSpaceOnUse" x1="1250" y1="0" x2="1520" y2="0"><stop offset="0" stop-color="#888888" stop-opacity="0"/><stop offset="1" stop-color="#888888" stop-opacity="0.8"/></linearGradient>
<rect x="1250" y="852" width="554" height="13" fill="url(#xr)"/>
<rect x="1250" y="804" width="450" height="8" fill="#828282" opacity="0.35"/>
<rect x="1195" y="862" width="15" height="22" fill="#808080"/>
<rect x="1195" y="884" width="14" height="13" fill="#585858"/>
<rect x="1196" y="893" width="13" height="2" fill="#8b8b8b"/>
<rect x="1196" y="906" width="13" height="2" fill="#949494"/>
<rect x="609" y="882" width="15" height="49" fill="#686868"/>
<rect x="609" y="870" width="12" height="8" fill="#8b8b8b"/>
<rect x="616" y="886" width="8" height="2" fill="#8b8b8b"/>
<rect x="616" y="895" width="8" height="2" fill="#8b8b8b"/>
<rect x="616" y="906" width="8" height="2" fill="#949494"/>
</g></defs>
<g filter="url(#sp)"><svg x="609" y="70" width="1195" height="620" viewBox="609 70 1195 620"><use href="#val"/></svg></g>
<g filter="url(#sp2)"><svg x="609" y="690" width="1195" height="241" viewBox="609 690 1195 241"><use href="#val"/></svg></g>
<g>
<rect x="609" y="106.8" width="1195" height="3" fill="#f9b815" opacity="0.45"/>
<rect x="609" y="132.5" width="1195" height="2.4" fill="#fac514" opacity="0.45"/>
<rect x="609" y="157.5" width="1195" height="2.8" fill="#fabb14" opacity="0.45"/>
<rect x="609" y="183.1" width="1195" height="2.8" fill="#fabb14" opacity="0.45"/>
<rect x="609" y="209.4" width="1195" height="3" fill="#e6212b" opacity="0.85"/>
<rect x="609" y="235" width="1195" height="3" fill="#f27f1c" opacity="0.85"/>
<rect x="609" y="239.8" width="1195" height="1.6" fill="#f8b116" opacity="0.45"/>
<rect x="609" y="260" width="1195" height="3.2" fill="#e5193b" opacity="0.85"/>
<rect x="609" y="285.8" width="1195" height="2" fill="#f8ac16" opacity="0.45"/>
<rect x="609" y="311.8" width="1195" height="3" fill="#e5193b" opacity="0.85"/>
<rect x="609" y="337.8" width="1195" height="2" fill="#f9ba15" opacity="0.45"/>
<rect x="609" y="362.2" width="1195" height="2.8" fill="#e6212c" opacity="0.85"/>
<rect x="609" y="372.8" width="1195" height="1.4" fill="#f4ee1c" opacity="0.45"/>
<rect x="609" y="388.2" width="1195" height="2.6" fill="#f7aa17" opacity="0.45"/>
<rect x="609" y="412.9" width="1195" height="3.6" fill="#ec5a2a" opacity="0.85"/>
<rect x="609" y="439.2" width="1195" height="3" fill="#ee6528" opacity="0.85"/>
<rect x="609" y="483" width="1195" height="2" fill="#ef6924" opacity="0.85"/>
<rect x="609" y="507" width="1195" height="2" fill="#f0751e" opacity="0.85"/>
<rect x="609" y="540.6" width="1195" height="2.8" fill="#f6ee1a" opacity="0.45"/>
<rect x="609" y="556.3" width="1195" height="2" fill="#f2811c" opacity="0.85"/>
<rect x="609" y="569" width="1195" height="1.6" fill="#f1ee1e" opacity="0.45"/>
<rect x="609" y="594.7" width="1195" height="1.6" fill="#f1ee1e" opacity="0.45"/>
<rect x="609" y="657.3" width="1195" height="1.4" fill="#e2e824" opacity="0.45"/>
<rect x="609" y="664.7" width="1195" height="2" fill="#f4ee1c" opacity="0.45"/>
<rect x="609" y="671.8" width="1195" height="1.8" fill="#f17b1d" opacity="0.85"/>
</g>
<g fill="#fff" shape-rendering="crispEdges">
<rect x="56" y="65" width="1" height="3"/>
<rect x="66" y="65" width="1" height="3"/>
<rect x="77" y="65" width="1" height="3"/>
<rect x="97" y="65" width="1" height="3"/>
<rect x="108" y="65" width="1" height="3"/>
<rect x="118" y="65" width="1" height="3"/>
<rect x="129" y="65" width="1" height="3"/>
<rect x="149" y="65" width="1" height="3"/>
<rect x="160" y="65" width="1" height="3"/>
<rect x="170" y="65" width="1" height="3"/>
<rect x="181" y="65" width="1" height="3"/>
<rect x="202" y="65" width="1" height="3"/>
<rect x="212" y="65" width="1" height="3"/>
<rect x="222" y="65" width="1" height="3"/>
<rect x="233" y="65" width="1" height="3"/>
<rect x="254" y="65" width="1" height="3"/>
<rect x="264" y="65" width="1" height="3"/>
<rect x="275" y="65" width="1" height="3"/>
<rect x="285" y="65" width="1" height="3"/>
<rect x="306" y="65" width="1" height="3"/>
<rect x="316" y="65" width="1" height="3"/>
<rect x="327" y="65" width="1" height="3"/>
<rect x="337" y="65" width="1" height="3"/>
<rect x="358" y="65" width="1" height="3"/>
<rect x="368" y="65" width="1" height="3"/>
<rect x="379" y="65" width="1" height="3"/>
<rect x="389" y="65" width="1" height="3"/>
<rect x="410" y="65" width="1" height="3"/>
<rect x="420" y="65" width="1" height="3"/>
<rect x="431" y="65" width="1" height="3"/>
<rect x="441" y="65" width="1" height="3"/>
<rect x="462" y="65" width="1" height="3"/>
<rect x="473" y="65" width="1" height="3"/>
<rect x="483" y="65" width="1" height="3"/>
<rect x="493" y="65" width="1" height="3"/>
<rect x="514" y="65" width="1" height="3"/>
<rect x="525" y="65" width="1" height="3"/>
<rect x="535" y="65" width="1" height="3"/>
<rect x="546" y="65" width="1" height="3"/>
<rect x="566" y="65" width="1" height="3"/>
<rect x="577" y="65" width="1" height="3"/>
<rect x="587" y="65" width="1" height="3"/>
<rect x="598" y="65" width="1" height="3"/>
<rect x="618" y="65" width="1" height="3"/>
<rect x="629" y="65" width="1" height="3"/>
<rect x="639" y="65" width="1" height="3"/>
<rect x="650" y="65" width="1" height="3"/>
<rect x="671" y="65" width="1" height="3"/>
<rect x="681" y="65" width="1" height="3"/>
<rect x="691" y="65" width="1" height="3"/>
<rect x="702" y="65" width="1" height="3"/>
<rect x="723" y="65" width="1" height="3"/>
<rect x="733" y="65" width="1" height="3"/>
<rect x="744" y="65" width="1" height="3"/>
<rect x="754" y="65" width="1" height="3"/>
<rect x="775" y="65" width="1" height="3"/>
<rect x="785" y="65" width="1" height="3"/>
<rect x="796" y="65" width="1" height="3"/>
<rect x="806" y="65" width="1" height="3"/>
<rect x="827" y="65" width="1" height="3"/>
<rect x="837" y="65" width="1" height="3"/>
<rect x="848" y="65" width="1" height="3"/>
<rect x="858" y="65" width="1" height="3"/>
<rect x="879" y="65" width="1" height="3"/>
<rect x="889" y="65" width="1" height="3"/>
<rect x="900" y="65" width="1" height="3"/>
<rect x="910" y="65" width="1" height="3"/>
<rect x="931" y="65" width="1" height="3"/>
<rect x="942" y="65" width="1" height="3"/>
<rect x="952" y="65" width="1" height="3"/>
<rect x="962" y="65" width="1" height="3"/>
<rect x="983" y="65" width="1" height="3"/>
<rect x="994" y="65" width="1" height="3"/>
<rect x="1004" y="65" width="1" height="3"/>
<rect x="1015" y="65" width="1" height="3"/>
<rect x="1035" y="65" width="1" height="3"/>
<rect x="1046" y="65" width="1" height="3"/>
<rect x="1056" y="65" width="1" height="3"/>
<rect x="1067" y="65" width="1" height="3"/>
<rect x="1088" y="65" width="1" height="3"/>
<rect x="1098" y="65" width="1" height="3"/>
<rect x="1108" y="65" width="1" height="3"/>
<rect x="1119" y="65" width="1" height="3"/>
<rect x="1140" y="65" width="1" height="3"/>
<rect x="1150" y="65" width="1" height="3"/>
<rect x="1160" y="65" width="1" height="3"/>
<rect x="1171" y="65" width="1" height="3"/>
<rect x="1192" y="65" width="1" height="3"/>
<rect x="1202" y="65" width="1" height="3"/>
<rect x="1213" y="65" width="1" height="3"/>
<rect x="1223" y="65" width="1" height="3"/>
<rect x="1244" y="65" width="1" height="3"/>
<rect x="1254" y="65" width="1" height="3"/>
<rect x="1265" y="65" width="1" height="3"/>
<rect x="1275" y="65" width="1" height="3"/>
<rect x="1296" y="65" width="1" height="3"/>
<rect x="1306" y="65" width="1" height="3"/>
<rect x="1317" y="65" width="1" height="3"/>
<rect x="1327" y="65" width="1" height="3"/>
<rect x="1348" y="65" width="1" height="3"/>
<rect x="1358" y="65" width="1" height="3"/>
<rect x="1369" y="65" width="1" height="3"/>
<rect x="1379" y="65" width="1" height="3"/>
<rect x="1400" y="65" width="1" height="3"/>
<rect x="1411" y="65" width="1" height="3"/>
<rect x="1421" y="65" width="1" height="3"/>
<rect x="1431" y="65" width="1" height="3"/>
<rect x="1452" y="65" width="1" height="3"/>
<rect x="1463" y="65" width="1" height="3"/>
<rect x="1473" y="65" width="1" height="3"/>
<rect x="1484" y="65" width="1" height="3"/>
<rect x="1504" y="65" width="1" height="3"/>
<rect x="1515" y="65" width="1" height="3"/>
<rect x="1525" y="65" width="1" height="3"/>
<rect x="1536" y="65" width="1" height="3"/>
<rect x="1557" y="65" width="1" height="3"/>
<rect x="1567" y="65" width="1" height="3"/>
<rect x="1577" y="65" width="1" height="3"/>
<rect x="1588" y="65" width="1" height="3"/>
<rect x="1609" y="65" width="1" height="3"/>
<rect x="1619" y="65" width="1" height="3"/>
<rect x="1629" y="65" width="1" height="3"/>
<rect x="1640" y="65" width="1" height="3"/>
<rect x="1661" y="65" width="1" height="3"/>
<rect x="1671" y="65" width="1" height="3"/>
<rect x="1682" y="65" width="1" height="3"/>
<rect x="1692" y="65" width="1" height="3"/>
<rect x="1713" y="65" width="1" height="3"/>
<rect x="1723" y="65" width="1" height="3"/>
<rect x="1734" y="65" width="1" height="3"/>
<rect x="1744" y="65" width="1" height="3"/>
<rect x="1765" y="65" width="1" height="3"/>
<rect x="1775" y="65" width="1" height="3"/>
<rect x="1786" y="65" width="1" height="3"/>
<rect x="1796" y="65" width="1" height="3"/>
<rect x="52" y="63" width="1" height="5"/>
<rect x="87" y="63" width="1" height="5"/>
<rect x="139" y="63" width="1" height="5"/>
<rect x="191" y="63" width="1" height="5"/>
<rect x="243" y="63" width="1" height="5"/>
<rect x="295" y="63" width="1" height="5"/>
<rect x="348" y="63" width="1" height="5"/>
<rect x="400" y="63" width="1" height="5"/>
<rect x="452" y="63" width="1" height="5"/>
<rect x="504" y="63" width="1" height="5"/>
<rect x="556" y="63" width="1" height="5"/>
<rect x="608" y="63" width="1" height="5"/>
<rect x="660" y="63" width="1" height="5"/>
<rect x="712" y="63" width="1" height="5"/>
<rect x="764" y="63" width="1" height="5"/>
<rect x="817" y="63" width="1" height="5"/>
<rect x="869" y="63" width="1" height="5"/>
<rect x="921" y="63" width="1" height="5"/>
<rect x="973" y="63" width="1" height="5"/>
<rect x="1025" y="63" width="1" height="5"/>
<rect x="1077" y="63" width="1" height="5"/>
<rect x="1129" y="63" width="1" height="5"/>
<rect x="1181" y="63" width="1" height="5"/>
<rect x="1233" y="63" width="1" height="5"/>
<rect x="1286" y="63" width="1" height="5"/>
<rect x="1338" y="63" width="1" height="5"/>
<rect x="1390" y="63" width="1" height="5"/>
<rect x="1442" y="63" width="1" height="5"/>
<rect x="1494" y="63" width="1" height="5"/>
<rect x="1546" y="63" width="1" height="5"/>
<rect x="1598" y="63" width="1" height="5"/>
<rect x="1650" y="63" width="1" height="5"/>
<rect x="1702" y="63" width="1" height="5"/>
<rect x="1755" y="63" width="1" height="5"/>
<rect x="1803" y="63" width="1" height="5"/>
<rect x="56" y="933" width="1" height="3"/>
<rect x="63" y="933" width="1" height="3"/>
<rect x="71" y="933" width="1" height="3"/>
<rect x="79" y="933" width="1" height="3"/>
<rect x="86" y="933" width="1" height="3"/>
<rect x="94" y="933" width="1" height="5"/>
<rect x="101" y="933" width="1" height="3"/>
<rect x="109" y="933" width="1" height="3"/>
<rect x="117" y="933" width="1" height="3"/>
<rect x="124" y="933" width="1" height="3"/>
<rect x="132" y="933" width="1" height="3"/>
<rect x="140" y="933" width="1" height="3"/>
<rect x="147" y="933" width="1" height="3"/>
<rect x="155" y="933" width="1" height="3"/>
<rect x="163" y="933" width="1" height="3"/>
<rect x="170" y="933" width="1" height="5"/>
<rect x="178" y="933" width="1" height="3"/>
<rect x="185" y="933" width="1" height="3"/>
<rect x="193" y="933" width="1" height="3"/>
<rect x="201" y="933" width="1" height="3"/>
<rect x="208" y="933" width="1" height="3"/>
<rect x="216" y="933" width="1" height="3"/>
<rect x="224" y="933" width="1" height="3"/>
<rect x="231" y="933" width="1" height="3"/>
<rect x="239" y="933" width="1" height="3"/>
<rect x="246" y="933" width="1" height="5"/>
<rect x="254" y="933" width="1" height="3"/>
<rect x="262" y="933" width="1" height="3"/>
<rect x="269" y="933" width="1" height="3"/>
<rect x="277" y="933" width="1" height="3"/>
<rect x="285" y="933" width="1" height="3"/>
<rect x="292" y="933" width="1" height="3"/>
<rect x="300" y="933" width="1" height="3"/>
<rect x="308" y="933" width="1" height="3"/>
<rect x="315" y="933" width="1" height="3"/>
<rect x="323" y="933" width="1" height="5"/>
<rect x="330" y="933" width="1" height="3"/>
<rect x="338" y="933" width="1" height="3"/>
<rect x="346" y="933" width="1" height="3"/>
<rect x="353" y="933" width="1" height="3"/>
<rect x="361" y="933" width="1" height="3"/>
<rect x="369" y="933" width="1" height="3"/>
<rect x="376" y="933" width="1" height="3"/>
<rect x="384" y="933" width="1" height="3"/>
<rect x="392" y="933" width="1" height="3"/>
<rect x="399" y="933" width="1" height="5"/>
<rect x="407" y="933" width="1" height="3"/>
<rect x="414" y="933" width="1" height="3"/>
<rect x="422" y="933" width="1" height="3"/>
<rect x="430" y="933" width="1" height="3"/>
<rect x="437" y="933" width="1" height="3"/>
<rect x="445" y="933" width="1" height="3"/>
<rect x="453" y="933" width="1" height="3"/>
<rect x="460" y="933" width="1" height="3"/>
<rect x="468" y="933" width="1" height="3"/>
<rect x="476" y="933" width="1" height="5"/>
<rect x="483" y="933" width="1" height="3"/>
<rect x="491" y="933" width="1" height="3"/>
<rect x="498" y="933" width="1" height="3"/>
<rect x="506" y="933" width="1" height="3"/>
<rect x="514" y="933" width="1" height="3"/>
<rect x="521" y="933" width="1" height="3"/>
<rect x="529" y="933" width="1" height="3"/>
<rect x="537" y="933" width="1" height="3"/>
<rect x="544" y="933" width="1" height="3"/>
<rect x="552" y="933" width="1" height="5"/>
<rect x="559" y="933" width="1" height="3"/>
<rect x="567" y="933" width="1" height="3"/>
<rect x="575" y="933" width="1" height="3"/>
<rect x="582" y="933" width="1" height="3"/>
<rect x="590" y="933" width="1" height="3"/>
<rect x="598" y="933" width="1" height="3"/>
<rect x="605" y="933" width="1" height="3"/>
<rect x="613" y="933" width="1" height="3"/>
<rect x="621" y="933" width="1" height="3"/>
<rect x="628" y="933" width="1" height="5"/>
<rect x="636" y="933" width="1" height="3"/>
<rect x="643" y="933" width="1" height="3"/>
<rect x="651" y="933" width="1" height="3"/>
<rect x="659" y="933" width="1" height="3"/>
<rect x="666" y="933" width="1" height="3"/>
<rect x="674" y="933" width="1" height="3"/>
<rect x="682" y="933" width="1" height="3"/>
<rect x="689" y="933" width="1" height="3"/>
<rect x="697" y="933" width="1" height="3"/>
<rect x="705" y="933" width="1" height="5"/>
<rect x="712" y="933" width="1" height="3"/>
<rect x="720" y="933" width="1" height="3"/>
<rect x="727" y="933" width="1" height="3"/>
<rect x="735" y="933" width="1" height="3"/>
<rect x="743" y="933" width="1" height="3"/>
<rect x="750" y="933" width="1" height="3"/>
<rect x="758" y="933" width="1" height="3"/>
<rect x="766" y="933" width="1" height="3"/>
<rect x="773" y="933" width="1" height="3"/>
<rect x="781" y="933" width="1" height="5"/>
<rect x="788" y="933" width="1" height="3"/>
<rect x="796" y="933" width="1" height="3"/>
<rect x="804" y="933" width="1" height="3"/>
<rect x="811" y="933" width="1" height="3"/>
<rect x="819" y="933" width="1" height="3"/>
<rect x="827" y="933" width="1" height="3"/>
<rect x="834" y="933" width="1" height="3"/>
<rect x="842" y="933" width="1" height="3"/>
<rect x="850" y="933" width="1" height="3"/>
<rect x="857" y="933" width="1" height="5"/>
<rect x="865" y="933" width="1" height="3"/>
<rect x="872" y="933" width="1" height="3"/>
<rect x="880" y="933" width="1" height="3"/>
<rect x="888" y="933" width="1" height="3"/>
<rect x="895" y="933" width="1" height="3"/>
<rect x="903" y="933" width="1" height="3"/>
<rect x="911" y="933" width="1" height="3"/>
<rect x="918" y="933" width="1" height="3"/>
<rect x="926" y="933" width="1" height="3"/>
<rect x="934" y="933" width="1" height="5"/>
<rect x="941" y="933" width="1" height="3"/>
<rect x="949" y="933" width="1" height="3"/>
<rect x="956" y="933" width="1" height="3"/>
<rect x="964" y="933" width="1" height="3"/>
<rect x="972" y="933" width="1" height="3"/>
<rect x="979" y="933" width="1" height="3"/>
<rect x="987" y="933" width="1" height="3"/>
<rect x="995" y="933" width="1" height="3"/>
<rect x="1002" y="933" width="1" height="3"/>
<rect x="1010" y="933" width="1" height="5"/>
<rect x="1018" y="933" width="1" height="3"/>
<rect x="1025" y="933" width="1" height="3"/>
<rect x="1033" y="933" width="1" height="3"/>
<rect x="1040" y="933" width="1" height="3"/>
<rect x="1048" y="933" width="1" height="3"/>
<rect x="1056" y="933" width="1" height="3"/>
<rect x="1063" y="933" width="1" height="3"/>
<rect x="1071" y="933" width="1" height="3"/>
<rect x="1079" y="933" width="1" height="3"/>
<rect x="1086" y="933" width="1" height="5"/>
<rect x="1094" y="933" width="1" height="3"/>
<rect x="1101" y="933" width="1" height="3"/>
<rect x="1109" y="933" width="1" height="3"/>
<rect x="1117" y="933" width="1" height="3"/>
<rect x="1124" y="933" width="1" height="3"/>
<rect x="1132" y="933" width="1" height="3"/>
<rect x="1140" y="933" width="1" height="3"/>
<rect x="1147" y="933" width="1" height="3"/>
<rect x="1155" y="933" width="1" height="3"/>
<rect x="1163" y="933" width="1" height="5"/>
<rect x="1170" y="933" width="1" height="3"/>
<rect x="1178" y="933" width="1" height="3"/>
<rect x="1185" y="933" width="1" height="3"/>
<rect x="1193" y="933" width="1" height="3"/>
<rect x="1201" y="933" width="1" height="3"/>
<rect x="1208" y="933" width="1" height="3"/>
<rect x="1216" y="933" width="1" height="3"/>
<rect x="1224" y="933" width="1" height="3"/>
<rect x="1231" y="933" width="1" height="3"/>
<rect x="1239" y="933" width="1" height="5"/>
<rect x="1247" y="933" width="1" height="3"/>
<rect x="1254" y="933" width="1" height="3"/>
<rect x="1262" y="933" width="1" height="3"/>
<rect x="1269" y="933" width="1" height="3"/>
<rect x="1277" y="933" width="1" height="3"/>
<rect x="1285" y="933" width="1" height="3"/>
<rect x="1292" y="933" width="1" height="3"/>
<rect x="1300" y="933" width="1" height="3"/>
<rect x="1308" y="933" width="1" height="3"/>
<rect x="1315" y="933" width="1" height="5"/>
<rect x="1323" y="933" width="1" height="3"/>
<rect x="1330" y="933" width="1" height="3"/>
<rect x="1338" y="933" width="1" height="3"/>
<rect x="1346" y="933" width="1" height="3"/>
<rect x="1353" y="933" width="1" height="3"/>
<rect x="1361" y="933" width="1" height="3"/>
<rect x="1369" y="933" width="1" height="3"/>
<rect x="1376" y="933" width="1" height="3"/>
<rect x="1384" y="933" width="1" height="3"/>
<rect x="1392" y="933" width="1" height="5"/>
<rect x="1399" y="933" width="1" height="3"/>
<rect x="1407" y="933" width="1" height="3"/>
<rect x="1414" y="933" width="1" height="3"/>
<rect x="1422" y="933" width="1" height="3"/>
<rect x="1430" y="933" width="1" height="3"/>
<rect x="1437" y="933" width="1" height="3"/>
<rect x="1445" y="933" width="1" height="3"/>
<rect x="1453" y="933" width="1" height="3"/>
<rect x="1460" y="933" width="1" height="3"/>
<rect x="1468" y="933" width="1" height="5"/>
<rect x="1476" y="933" width="1" height="3"/>
<rect x="1483" y="933" width="1" height="3"/>
<rect x="1491" y="933" width="1" height="3"/>
<rect x="1498" y="933" width="1" height="3"/>
<rect x="1506" y="933" width="1" height="3"/>
<rect x="1514" y="933" width="1" height="3"/>
<rect x="1521" y="933" width="1" height="3"/>
<rect x="1529" y="933" width="1" height="3"/>
<rect x="1537" y="933" width="1" height="3"/>
<rect x="1544" y="933" width="1" height="5"/>
<rect x="1552" y="933" width="1" height="3"/>
<rect x="1560" y="933" width="1" height="3"/>
<rect x="1567" y="933" width="1" height="3"/>
<rect x="1575" y="933" width="1" height="3"/>
<rect x="1582" y="933" width="1" height="3"/>
<rect x="1590" y="933" width="1" height="3"/>
<rect x="1598" y="933" width="1" height="3"/>
<rect x="1605" y="933" width="1" height="3"/>
<rect x="1613" y="933" width="1" height="3"/>
<rect x="1621" y="933" width="1" height="5"/>
<rect x="1628" y="933" width="1" height="3"/>
<rect x="1636" y="933" width="1" height="3"/>
<rect x="1643" y="933" width="1" height="3"/>
<rect x="1651" y="933" width="1" height="3"/>
<rect x="1659" y="933" width="1" height="3"/>
<rect x="1666" y="933" width="1" height="3"/>
<rect x="1674" y="933" width="1" height="3"/>
<rect x="1682" y="933" width="1" height="3"/>
<rect x="1689" y="933" width="1" height="3"/>
<rect x="1697" y="933" width="1" height="5"/>
<rect x="1705" y="933" width="1" height="3"/>
<rect x="1712" y="933" width="1" height="3"/>
<rect x="1720" y="933" width="1" height="3"/>
<rect x="1727" y="933" width="1" height="3"/>
<rect x="1735" y="933" width="1" height="3"/>
<rect x="1743" y="933" width="1" height="3"/>
<rect x="1750" y="933" width="1" height="3"/>
<rect x="1758" y="933" width="1" height="3"/>
<rect x="1766" y="933" width="1" height="3"/>
<rect x="1773" y="933" width="1" height="5"/>
<rect x="1781" y="933" width="1" height="3"/>
<rect x="1789" y="933" width="1" height="3"/>
<rect x="1796" y="933" width="1" height="3"/>
<rect x="52" y="933" width="1" height="5"/>
<rect x="1803" y="933" width="1" height="5"/>
<rect x="45" y="930" width="5" height="1"/>
<rect x="1806" y="930" width="5" height="1"/>
<rect x="47" y="919" width="3" height="1"/>
<rect x="1806" y="919" width="3" height="1"/>
<rect x="45" y="908" width="5" height="1"/>
<rect x="1806" y="908" width="5" height="1"/>
<rect x="47" y="898" width="3" height="1"/>
<rect x="1806" y="898" width="3" height="1"/>
<rect x="45" y="887" width="5" height="1"/>
<rect x="1806" y="887" width="5" height="1"/>
<rect x="47" y="876" width="3" height="1"/>
<rect x="1806" y="876" width="3" height="1"/>
<rect x="45" y="865" width="5" height="1"/>
<rect x="1806" y="865" width="5" height="1"/>
<rect x="47" y="855" width="3" height="1"/>
<rect x="1806" y="855" width="3" height="1"/>
<rect x="45" y="844" width="5" height="1"/>
<rect x="1806" y="844" width="5" height="1"/>
<rect x="47" y="833" width="3" height="1"/>
<rect x="1806" y="833" width="3" height="1"/>
<rect x="45" y="822" width="5" height="1"/>
<rect x="1806" y="822" width="5" height="1"/>
<rect x="47" y="812" width="3" height="1"/>
<rect x="1806" y="812" width="3" height="1"/>
<rect x="45" y="801" width="5" height="1"/>
<rect x="1806" y="801" width="5" height="1"/>
<rect x="47" y="790" width="3" height="1"/>
<rect x="1806" y="790" width="3" height="1"/>
<rect x="45" y="779" width="5" height="1"/>
<rect x="1806" y="779" width="5" height="1"/>
<rect x="47" y="769" width="3" height="1"/>
<rect x="1806" y="769" width="3" height="1"/>
<rect x="45" y="758" width="5" height="1"/>
<rect x="1806" y="758" width="5" height="1"/>
<rect x="47" y="747" width="3" height="1"/>
<rect x="1806" y="747" width="3" height="1"/>
<rect x="45" y="736" width="5" height="1"/>
<rect x="1806" y="736" width="5" height="1"/>
<rect x="47" y="726" width="3" height="1"/>
<rect x="1806" y="726" width="3" height="1"/>
<rect x="45" y="715" width="5" height="1"/>
<rect x="1806" y="715" width="5" height="1"/>
<rect x="47" y="704" width="3" height="1"/>
<rect x="1806" y="704" width="3" height="1"/>
<rect x="45" y="693" width="5" height="1"/>
<rect x="1806" y="693" width="5" height="1"/>
<rect x="47" y="683" width="3" height="1"/>
<rect x="1806" y="683" width="3" height="1"/>
<rect x="45" y="672" width="5" height="1"/>
<rect x="1806" y="672" width="5" height="1"/>
<rect x="47" y="661" width="3" height="1"/>
<rect x="1806" y="661" width="3" height="1"/>
<rect x="45" y="650" width="5" height="1"/>
<rect x="1806" y="650" width="5" height="1"/>
<rect x="47" y="640" width="3" height="1"/>
<rect x="1806" y="640" width="3" height="1"/>
<rect x="45" y="629" width="5" height="1"/>
<rect x="1806" y="629" width="5" height="1"/>
<rect x="47" y="618" width="3" height="1"/>
<rect x="1806" y="618" width="3" height="1"/>
<rect x="45" y="607" width="5" height="1"/>
<rect x="1806" y="607" width="5" height="1"/>
<rect x="47" y="597" width="3" height="1"/>
<rect x="1806" y="597" width="3" height="1"/>
<rect x="45" y="586" width="5" height="1"/>
<rect x="1806" y="586" width="5" height="1"/>
<rect x="47" y="575" width="3" height="1"/>
<rect x="1806" y="575" width="3" height="1"/>
<rect x="45" y="564" width="5" height="1"/>
<rect x="1806" y="564" width="5" height="1"/>
<rect x="47" y="554" width="3" height="1"/>
<rect x="1806" y="554" width="3" height="1"/>
<rect x="45" y="543" width="5" height="1"/>
<rect x="1806" y="543" width="5" height="1"/>
<rect x="47" y="532" width="3" height="1"/>
<rect x="1806" y="532" width="3" height="1"/>
<rect x="45" y="521" width="5" height="1"/>
<rect x="1806" y="521" width="5" height="1"/>
<rect x="47" y="511" width="3" height="1"/>
<rect x="1806" y="511" width="3" height="1"/>
<rect x="45" y="500" width="5" height="1"/>
<rect x="1806" y="500" width="5" height="1"/>
<rect x="47" y="489" width="3" height="1"/>
<rect x="1806" y="489" width="3" height="1"/>
<rect x="45" y="478" width="5" height="1"/>
<rect x="1806" y="478" width="5" height="1"/>
<rect x="47" y="468" width="3" height="1"/>
<rect x="1806" y="468" width="3" height="1"/>
<rect x="45" y="457" width="5" height="1"/>
<rect x="1806" y="457" width="5" height="1"/>
<rect x="47" y="446" width="3" height="1"/>
<rect x="1806" y="446" width="3" height="1"/>
<rect x="45" y="435" width="5" height="1"/>
<rect x="1806" y="435" width="5" height="1"/>
<rect x="47" y="425" width="3" height="1"/>
<rect x="1806" y="425" width="3" height="1"/>
<rect x="45" y="414" width="5" height="1"/>
<rect x="1806" y="414" width="5" height="1"/>
<rect x="47" y="403" width="3" height="1"/>
<rect x="1806" y="403" width="3" height="1"/>
<rect x="45" y="392" width="5" height="1"/>
<rect x="1806" y="392" width="5" height="1"/>
<rect x="47" y="382" width="3" height="1"/>
<rect x="1806" y="382" width="3" height="1"/>
<rect x="45" y="371" width="5" height="1"/>
<rect x="1806" y="371" width="5" height="1"/>
<rect x="47" y="360" width="3" height="1"/>
<rect x="1806" y="360" width="3" height="1"/>
<rect x="45" y="349" width="5" height="1"/>
<rect x="1806" y="349" width="5" height="1"/>
<rect x="47" y="339" width="3" height="1"/>
<rect x="1806" y="339" width="3" height="1"/>
<rect x="45" y="328" width="5" height="1"/>
<rect x="1806" y="328" width="5" height="1"/>
<rect x="47" y="317" width="3" height="1"/>
<rect x="1806" y="317" width="3" height="1"/>
<rect x="45" y="306" width="5" height="1"/>
<rect x="1806" y="306" width="5" height="1"/>
<rect x="47" y="296" width="3" height="1"/>
<rect x="1806" y="296" width="3" height="1"/>
<rect x="45" y="285" width="5" height="1"/>
<rect x="1806" y="285" width="5" height="1"/>
<rect x="47" y="274" width="3" height="1"/>
<rect x="1806" y="274" width="3" height="1"/>
<rect x="45" y="263" width="5" height="1"/>
<rect x="1806" y="263" width="5" height="1"/>
<rect x="47" y="253" width="3" height="1"/>
<rect x="1806" y="253" width="3" height="1"/>
<rect x="45" y="242" width="5" height="1"/>
<rect x="1806" y="242" width="5" height="1"/>
<rect x="47" y="231" width="3" height="1"/>
<rect x="1806" y="231" width="3" height="1"/>
<rect x="45" y="220" width="5" height="1"/>
<rect x="1806" y="220" width="5" height="1"/>
<rect x="47" y="210" width="3" height="1"/>
<rect x="1806" y="210" width="3" height="1"/>
<rect x="45" y="199" width="5" height="1"/>
<rect x="1806" y="199" width="5" height="1"/>
<rect x="47" y="188" width="3" height="1"/>
<rect x="1806" y="188" width="3" height="1"/>
<rect x="45" y="177" width="5" height="1"/>
<rect x="1806" y="177" width="5" height="1"/>
<rect x="47" y="167" width="3" height="1"/>
<rect x="1806" y="167" width="3" height="1"/>
<rect x="45" y="156" width="5" height="1"/>
<rect x="1806" y="156" width="5" height="1"/>
<rect x="47" y="145" width="3" height="1"/>
<rect x="1806" y="145" width="3" height="1"/>
<rect x="45" y="134" width="5" height="1"/>
<rect x="1806" y="134" width="5" height="1"/>
<rect x="47" y="124" width="3" height="1"/>
<rect x="1806" y="124" width="3" height="1"/>
<rect x="45" y="113" width="5" height="1"/>
<rect x="1806" y="113" width="5" height="1"/>
<rect x="47" y="102" width="3" height="1"/>
<rect x="1806" y="102" width="3" height="1"/>
<rect x="45" y="91" width="5" height="1"/>
<rect x="1806" y="91" width="5" height="1"/>
<rect x="47" y="81" width="3" height="1"/>
<rect x="1806" y="81" width="3" height="1"/>
<rect x="45" y="70" width="5" height="1"/>
<rect x="1806" y="70" width="5" height="1"/>
</g>
<g class="m">
<text x="52.5" y="61">1866</text>
<text x="87.94" y="61">1900</text>
<text x="140.05" y="61">1950</text>
<text x="192.16" y="61">2000</text>
<text x="244.28" y="61">2050</text>
<text x="296.39" y="61">2100</text>
<text x="348.5" y="61">2150</text>
<text x="400.62" y="61">2200</text>
<text x="452.73" y="61">2250</text>
<text x="504.84" y="61">2300</text>
<text x="556.95" y="61">2350</text>
<text x="609.07" y="61">2400</text>
<text x="661.18" y="61">2450</text>
<text x="713.29" y="61">2500</text>
<text x="765.41" y="61">2550</text>
<text x="817.52" y="61">2600</text>
<text x="869.63" y="61">2650</text>
<text x="921.75" y="61">2700</text>
<text x="973.86" y="61">2750</text>
<text x="1025.97" y="61">2800</text>
<text x="1078.09" y="61">2850</text>
<text x="1130.2" y="61">2900</text>
<text x="1182.31" y="61">2950</text>
<text x="1234.42" y="61">3000</text>
<text x="1286.54" y="61">3050</text>
<text x="1338.65" y="61">3100</text>
<text x="1390.76" y="61">3150</text>
<text x="1442.88" y="61">3200</text>
<text x="1494.99" y="61">3250</text>
<text x="1547.1" y="61">3300</text>
<text x="1599.22" y="61">3350</text>
<text x="1651.33" y="61">3400</text>
<text x="1703.44" y="61">3450</text>
<text x="1755.56" y="61">3500</text>
<text x="1803.5" y="61">3546</text>
</g>
<g class="e">
<text x="43.6" y="934">0</text>
<text x="43.6" y="912">5</text>
<text x="43.6" y="891">10</text>
<text x="43.6" y="869">15</text>
<text x="43.6" y="848">20</text>
<text x="43.6" y="826">25</text>
<text x="43.6" y="805">30</text>
<text x="43.6" y="783">35</text>
<text x="43.6" y="762">40</text>
<text x="43.6" y="740">45</text>
<text x="43.6" y="719">50</text>
<text x="43.6" y="697">55</text>
<text x="43.6" y="676">60</text>
<text x="43.6" y="654">65</text>
<text x="43.6" y="633">70</text>
<text x="43.6" y="611">75</text>
<text x="43.6" y="590">80</text>
<text x="43.6" y="568">85</text>
<text x="43.6" y="547">90</text>
<text x="43.6" y="525">95</text>
<text x="43.6" y="504">100</text>
<text x="43.6" y="482">105</text>
<text x="43.6" y="461">110</text>
<text x="43.6" y="439">115</text>
<text x="43.6" y="418">120</text>
<text x="43.6" y="396">125</text>
<text x="43.6" y="375">130</text>
<text x="43.6" y="353">135</text>
<text x="43.6" y="332">140</text>
<text x="43.6" y="310">145</text>
<text x="43.6" y="289">150</text>
<text x="43.6" y="267">155</text>
<text x="43.6" y="246">160</text>
<text x="43.6" y="224">165</text>
<text x="43.6" y="203">170</text>
<text x="43.6" y="181">175</text>
<text x="43.6" y="160">180</text>
<text x="43.6" y="138">185</text>
<text x="43.6" y="117">190</text>
<text x="43.6" y="95">195</text>
<text x="43.6" y="74">200</text>
</g>
<g class="m">
<text x="51.7" y="948">20:37:13.686</text><text x="51.7" y="960">02/26/2026</text>
<text x="170.36" y="948">20:45:00.000</text><text x="170.36" y="960">02/26/2026</text>
<text x="246.7" y="948">20:50:00.000</text><text x="246.7" y="960">02/26/2026</text>
<text x="323.03" y="948">20:55:00.000</text><text x="323.03" y="960">02/26/2026</text>
<text x="399.37" y="948">21:00:00.000</text><text x="399.37" y="960">02/26/2026</text>
<text x="475.71" y="948">21:05:00.000</text><text x="475.71" y="960">02/26/2026</text>
<text x="552.05" y="948">21:10:00.000</text><text x="552.05" y="960">02/26/2026</text>
<text x="628.38" y="948">21:15:00.000</text><text x="628.38" y="960">02/26/2026</text>
<text x="704.72" y="948">21:20:00.000</text><text x="704.72" y="960">02/26/2026</text>
<text x="781.06" y="948">21:25:00.000</text><text x="781.06" y="960">02/26/2026</text>
<text x="857.4" y="948">21:30:00.000</text><text x="857.4" y="960">02/26/2026</text>
<text x="933.73" y="948">21:35:00.000</text><text x="933.73" y="960">02/26/2026</text>
<text x="1010.07" y="948">21:40:00.000</text><text x="1010.07" y="960">02/26/2026</text>
<text x="1086.41" y="948">21:45:00.000</text><text x="1086.41" y="960">02/26/2026</text>
<text x="1162.75" y="948">21:50:00.000</text><text x="1162.75" y="960">02/26/2026</text>
<text x="1239.08" y="948">21:55:00.000</text><text x="1239.08" y="960">02/26/2026</text>
<text x="1315.42" y="948">22:00:00.000</text><text x="1315.42" y="960">02/26/2026</text>
<text x="1391.76" y="948">22:05:00.000</text><text x="1391.76" y="960">02/26/2026</text>
<text x="1468.1" y="948">22:10:00.000</text><text x="1468.1" y="960">02/26/2026</text>
<text x="1544.43" y="948">22:15:00.000</text><text x="1544.43" y="960">02/26/2026</text>
<text x="1620.77" y="948">22:20:00.000</text><text x="1620.77" y="960">02/26/2026</text>
<text x="1697.11" y="948">22:25:00.000</text><text x="1697.11" y="960">02/26/2026</text>
<text x="1802.7" y="948">22:31:54.967</text><text x="1802.7" y="960">02/26/2026</text>
<text x="925" y="974" textLength="20" lengthAdjust="spacingAndGlyphs">Time</text>
</g>
<g class="b">
<text class="p" y="16"><tspan x="809.3" textLength="21.6" lengthAdjust="spacingAndGlyphs">AOS</tspan>  <tspan x="838.6" textLength="125.8" lengthAdjust="spacingAndGlyphs">Thu 26 Feb 2026 22:31:39</tspan>  <tspan x="971" textLength="22.2" lengthAdjust="spacingAndGlyphs">AOS</tspan></text>
<text class="p" y="28"><tspan x="727.6" textLength="94.7" lengthAdjust="spacingAndGlyphs">CoordSystem:es18</tspan>  <tspan x="831.5" textLength="72.2" lengthAdjust="spacingAndGlyphs">SensorID:es18</tspan>  <tspan x="915.5" textLength="48.1" lengthAdjust="spacingAndGlyphs">Axis:sum</tspan>  <tspan x="975.8" textLength="98" lengthAdjust="spacingAndGlyphs">Windowing:Hanning</tspan></text>
<text class="p" y="40"><tspan x="618.9" textLength="77.4" lengthAdjust="spacingAndGlyphs">Cuttoff(Hz):200</tspan>  <tspan x="714.5" textLength="66.9" lengthAdjust="spacingAndGlyphs">df(Hz):0.2441</tspan>  <tspan x="799.2" textLength="80.1" lengthAdjust="spacingAndGlyphs">Sample/Sec:500</tspan>  <tspan x="900.5" textLength="72.2" lengthAdjust="spacingAndGlyphs">PSD size:2048</tspan>  <tspan x="993.4" textLength="64.4" lengthAdjust="spacingAndGlyphs">Overlap(%):0</tspan>  <tspan x="1081.9" textLength="101.5" lengthAdjust="spacingAndGlyphs">TimeRes.(sec):4.096</tspan></text>
</g>
<rect x="1841" y="74" width="18" height="3" fill="#f0508c"/>
<rect x="1841" y="79" width="18" height="857" fill="url(#cb)"/>
<rect x="1841" y="937" width="18" height="3" fill="#fff"/>
<text x="1868" y="83">-5.00</text>
<text x="1869" y="511">-9.00</text>
<text x="1868.5" y="939">-13.00</text>
<text class="m" transform="translate(1911,507.5) rotate(90)" textLength="125" lengthAdjust="spacing">Amplitude(Log10(g^2/Hz))</text>
</svg>
</body></html>
